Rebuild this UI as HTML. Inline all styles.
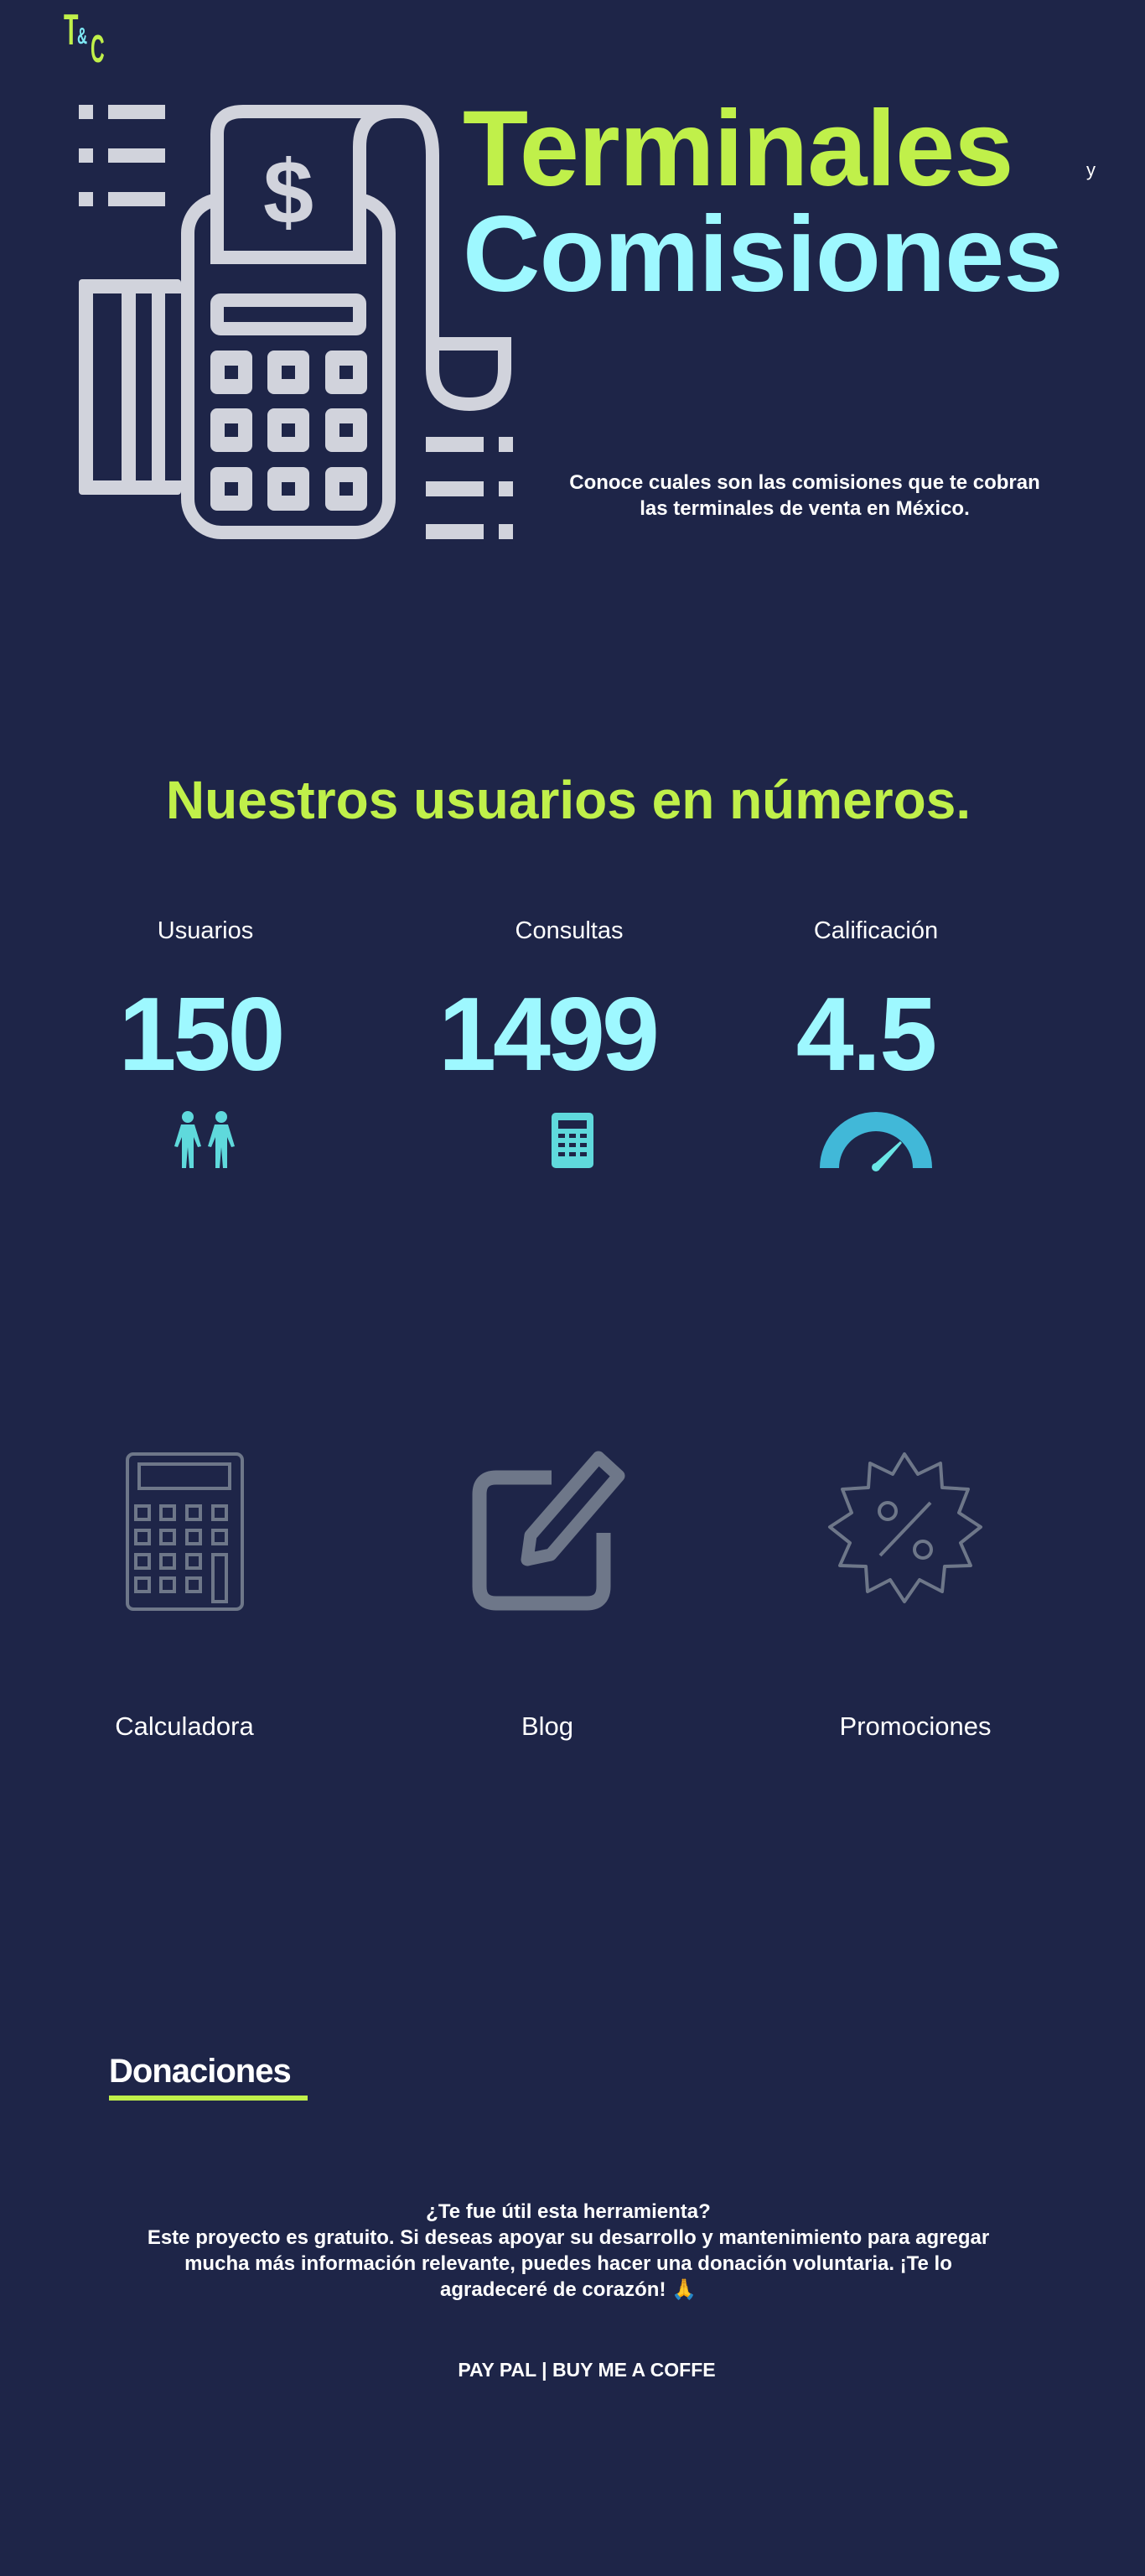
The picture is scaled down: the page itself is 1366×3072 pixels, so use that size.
<!DOCTYPE html>
<html><head><meta charset="utf-8">
<style>
*{margin:0;padding:0;box-sizing:border-box}
html,body{width:1366px;height:3072px;background:#1e2548;overflow:hidden}
body{position:relative;font-family:"Liberation Sans","DejaVu Sans",sans-serif;color:#fff}
.a{position:absolute;white-space:nowrap}
.c{transform:translateX(-50%);text-align:center}
.lg{position:absolute;line-height:1;font-weight:bold;transform-origin:left top}
</style></head><body>

<div class="lg" style="left:76px;top:10px;font-size:52px;color:#c0f04a;transform:scaleX(.55)">T</div>
<div class="lg" style="left:92px;top:29px;font-size:28px;color:#7fe9f5;transform:scaleX(.6)">&amp;</div>
<div class="lg" style="left:108px;top:35px;font-size:46px;color:#c0f04a;transform:scaleX(.5)">C</div>

<svg class="a" style="left:0;top:0" width="700" height="700" viewBox="0 0 700 700">
<g fill="#d1d3dc">
<rect x="94" y="125" width="17" height="17"/><rect x="129" y="125" width="68" height="17"/>
<rect x="94" y="177" width="17" height="17"/><rect x="129" y="177" width="68" height="17"/>
<rect x="94" y="229" width="17" height="17"/><rect x="129" y="229" width="68" height="17"/>
<rect x="508" y="521" width="69" height="18"/><rect x="595" y="521" width="17" height="18"/>
<rect x="508" y="574" width="69" height="18"/><rect x="595" y="574" width="17" height="18"/>
<rect x="508" y="625" width="69" height="18"/><rect x="595" y="625" width="17" height="18"/>
<rect x="94" y="333" width="122" height="257" rx="4"/>
</g>
<g fill="#1e2548">
<rect x="111" y="350" width="34" height="223"/><rect x="162" y="350" width="19" height="223"/><rect x="197" y="350" width="19" height="223"/>
</g>
<g fill="none" stroke="#d1d3dc" stroke-width="16">
<path d="M259 295 V160 Q259 133 290 133 H478 Q516 133 516 185 V440"/>
<path d="M429 230 V175 Q429 133 470 133"/>
<rect x="224" y="238" width="240" height="397" rx="40"/>
<rect x="259" y="358" width="170" height="34" rx="4"/>
<path d="M516 410 H602 V440 Q602 482 560 482 Q516 482 516 440"/>
</g>
<rect x="251" y="230" width="186" height="85" rx="6" fill="#1e2548"/>
<path d="M259 230 V307 H429 V230" fill="none" stroke="#d1d3dc" stroke-width="16"/>
<text x="344" y="266" text-anchor="middle" font-family="Liberation Sans" font-weight="bold" font-size="108" fill="#d1d3dc">$</text>
<g fill="#d1d3dc">
<rect x="251" y="418" width="50" height="52" rx="8"/><rect x="319" y="418" width="50" height="52" rx="8"/><rect x="388" y="418" width="50" height="52" rx="8"/>
<rect x="251" y="487" width="50" height="52" rx="8"/><rect x="319" y="487" width="50" height="52" rx="8"/><rect x="388" y="487" width="50" height="52" rx="8"/>
<rect x="251" y="557" width="50" height="52" rx="8"/><rect x="319" y="557" width="50" height="52" rx="8"/><rect x="388" y="557" width="50" height="52" rx="8"/>
</g>
<g fill="#1e2548">
<rect x="268" y="436" width="16" height="16"/><rect x="336" y="436" width="16" height="16"/><rect x="405" y="436" width="16" height="16"/>
<rect x="268" y="505" width="16" height="16"/><rect x="336" y="505" width="16" height="16"/><rect x="405" y="505" width="16" height="16"/>
<rect x="268" y="575" width="16" height="16"/><rect x="336" y="575" width="16" height="16"/><rect x="405" y="575" width="16" height="16"/>
</g>
</svg>

<div class="a" style="left:552px;top:114px;font-size:128px;line-height:1;color:#c0f04a;font-weight:bold;letter-spacing:-1px">Terminales</div>
<div class="a" style="left:1296px;top:190px;font-size:22px;color:#fff">y</div>
<div class="a" style="left:552px;top:240px;font-size:128px;line-height:1;color:#9ef8ff;font-weight:bold;letter-spacing:-1px">Comisiones</div>
<div class="a c" style="left:960px;top:560px;font-size:24px;font-weight:bold;line-height:31px">Conoce cuales son las comisiones que te cobran<br>las terminales de venta en México.</div>

<div class="a c" style="left:678px;top:922px;font-size:64px;line-height:1;color:#c0f04a;font-weight:bold">Nuestros usuarios en números.</div>
<div class="a c" style="left:245px;top:1094px;font-size:29px">Usuarios</div>
<div class="a c" style="left:679px;top:1094px;font-size:29px">Consultas</div>
<div class="a c" style="left:1045px;top:1094px;font-size:29px">Calificación</div>
<div class="a c" style="left:239px;top:1172px;font-size:124px;line-height:1;color:#9ef8ff;letter-spacing:-4px;font-weight:bold">150</div>
<div class="a c" style="left:653px;top:1172px;font-size:124px;line-height:1;color:#9ef8ff;letter-spacing:-4px;font-weight:bold">1499</div>
<div class="a c" style="left:1033px;top:1172px;font-size:124px;line-height:1;color:#9ef8ff;letter-spacing:-2px;font-weight:bold">4.5</div>

<svg class="a" style="left:0;top:1320px" width="1366" height="80">
<g fill="#5fd9dc">
<circle cx="224" cy="12" r="7"/><path d="M216 21 H232 L240 47 L236 48 L231 36 L231 73 L226 73 L224 48 L222 73 L217 73 L217 36 L212 48 L208 47 Z"/>
<circle cx="264" cy="12" r="7"/><path d="M256 21 H272 L280 47 L276 48 L271 36 L271 73 L266 73 L264 48 L262 73 L257 73 L257 36 L252 48 L248 47 Z"/>
<rect x="658" y="7" width="50" height="66" rx="5"/>
</g>
<g fill="#1e2548">
<rect x="666" y="16" width="34" height="10"/>
<rect x="666" y="32" width="8" height="5"/><rect x="679" y="32" width="8" height="5"/><rect x="692" y="32" width="8" height="5"/>
<rect x="666" y="43" width="8" height="5"/><rect x="679" y="43" width="8" height="5"/><rect x="692" y="43" width="8" height="5"/>
<rect x="666" y="54" width="8" height="5"/><rect x="679" y="54" width="8" height="5"/><rect x="692" y="54" width="8" height="5"/>
</g>
<path d="M978 73 A67 67 0 0 1 1112 73 H1089 A44 44 0 0 0 1001 73 Z" fill="#41b8d8"/>
<path d="M1041 70 L1074 41 L1076 43 L1048 76 Z" fill="#6ae6e6"/><circle cx="1045" cy="72" r="5" fill="#6ae6e6"/>
</svg>

<svg class="a" style="left:0;top:1730px" width="1366" height="195" fill="none" stroke="#6e7789">
<g stroke-width="4">
<rect x="152" y="4" width="137" height="185" rx="7"/>
<rect x="166" y="16" width="108" height="29"/>
<rect x="162" y="66" width="16" height="16"/><rect x="192" y="66" width="16" height="16"/><rect x="223" y="66" width="16" height="16"/><rect x="254" y="66" width="16" height="16"/>
<rect x="162" y="95" width="16" height="16"/><rect x="192" y="95" width="16" height="16"/><rect x="223" y="95" width="16" height="16"/><rect x="254" y="95" width="16" height="16"/>
<rect x="162" y="124" width="16" height="16"/><rect x="192" y="124" width="16" height="16"/><rect x="223" y="124" width="16" height="16"/><rect x="254" y="124" width="16" height="56"/>
<rect x="162" y="152" width="16" height="16"/><rect x="192" y="152" width="16" height="16"/><rect x="223" y="152" width="16" height="16"/>
</g>
<path d="M658 32 H592 Q572 32 572 52 V162 Q572 182 592 182 H700 Q720 182 720 162 V98" stroke-width="17"/>
<path d="M629 130 L633 101 L714 8 L738 30 L657 124 Z" stroke-width="15" stroke-linejoin="round"/>
<path d="M1079 4 L1095 28 L1122 15 L1124 44 L1155 46 L1144 74 L1170 91 L1146 110 L1158 137 L1127 138 L1124 168 L1097 154 L1079 180 L1062 154 L1035 168 L1033 138 L1002 137 L1014 110 L990 91 L1016 74 L1005 46 L1036 44 L1038 15 L1065 28 Z" stroke-width="4" stroke-linejoin="round"/>
<circle cx="1059" cy="72" r="10" stroke-width="4"/><circle cx="1101" cy="118" r="10" stroke-width="4"/>
<path d="M1050 125 L1110 62" stroke-width="4"/>
</svg>

<div class="a c" style="left:220px;top:2041px;font-size:31px">Calculadora</div>
<div class="a c" style="left:653px;top:2041px;font-size:31px">Blog</div>
<div class="a c" style="left:1092px;top:2041px;font-size:31px">Promociones</div>

<div class="a" style="left:130px;top:2448px;font-size:40px;font-weight:bold;letter-spacing:-1px">Donaciones</div>
<div class="a" style="left:130px;top:2499px;width:237px;height:6px;background:#c0f04a"></div>

<div class="a c" style="left:678px;top:2622px;font-size:24px;font-weight:bold;line-height:31px">¿Te fue útil esta herramienta?<br>Este proyecto es gratuito. Si deseas apoyar su desarrollo y mantenimiento para agregar<br>mucha más información relevante, puedes hacer una donación voluntaria. ¡Te lo<br>agradeceré de corazón! 🙏</div>
<div class="a c" style="left:700px;top:2813px;font-size:23px;font-weight:bold">PAY PAL | BUY ME A COFFE</div>
</body></html>
